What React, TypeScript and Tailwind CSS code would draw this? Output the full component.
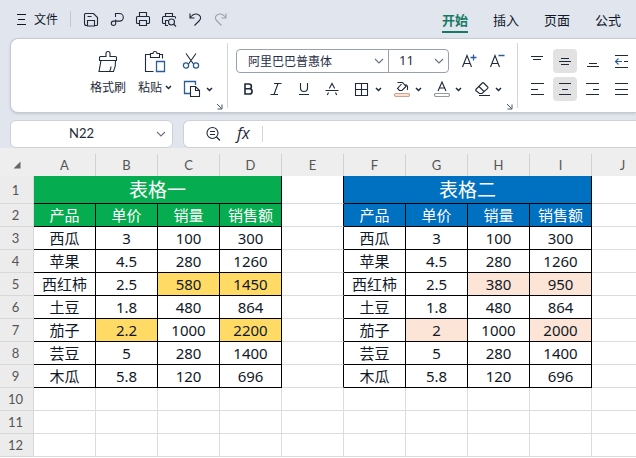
import React, { useState } from 'react';

interface Row {
  cells: string[];
  marked?: number[];
}

interface SheetTable {
  title: string;
  rows: Row[];
}

const columns = ['A', 'B', 'C', 'D', 'E', 'F', 'G', 'H', 'I', 'J'];
const rowNumbers = [1, 2, 3, 4, 5, 6, 7, 8, 9, 10, 11, 12];
const tabs = ['开始', '插入', '页面', '公式'];
const fields = ['产品', '单价', '销量', '销售额'];

const firstTable: SheetTable = {
  title: '表格一',
  rows: [
    { cells: ['西瓜', '3', '100', '300'] },
    { cells: ['苹果', '4.5', '280', '1260'] },
    { cells: ['西红柿', '2.5', '580', '1450'], marked: [2, 3] },
    { cells: ['土豆', '1.8', '480', '864'] },
    { cells: ['茄子', '2.2', '1000', '2200'], marked: [1, 3] },
    { cells: ['芸豆', '5', '280', '1400'] },
    { cells: ['木瓜', '5.8', '120', '696'] },
  ],
};

const secondTable: SheetTable = {
  title: '表格二',
  rows: [
    { cells: ['西瓜', '3', '100', '300'] },
    { cells: ['苹果', '4.5', '280', '1260'] },
    { cells: ['西红柿', '2.5', '380', '950'], marked: [2, 3] },
    { cells: ['土豆', '1.8', '480', '864'] },
    { cells: ['茄子', '2', '1000', '2000'], marked: [1, 3] },
    { cells: ['芸豆', '5', '280', '1400'] },
    { cells: ['木瓜', '5.8', '120', '696'] },
  ],
};

const Icon: React.FC<{ size?: number; className?: string; children: React.ReactNode }> = ({
  size = 16,
  className = '',
  children,
}) => (
  <svg
    width={size}
    height={size}
    viewBox={`0 0 ${size} ${size}`}
    fill="none"
    stroke="currentColor"
    strokeWidth="1.1"
    className={`shrink-0 ${className}`}
    aria-hidden="true"
  >
    {children}
  </svg>
);

const Caret = () => (
  <Icon size={7}>
    <path d="M1 2l2.5 2.5L6 2" strokeWidth="1.5" />
  </Icon>
);

const WideChevron: React.FC<{ className?: string }> = ({ className }) => (
  <Icon size={10} className={className}>
    <path d="M1 3l4 4 4-4" />
  </Icon>
);

const Launcher: React.FC<{ label: string }> = ({ label }) => (
  <button aria-label={label} className="absolute right-1 -bottom-0.5 text-gray-600">
    <Icon size={7}>
      <path d="M1 1l4.5 4.5M6 1.5V6H1.5" strokeWidth="1" />
    </Icon>
  </button>
);

const quickActions = [
  {
    label: '保存',
    icon: <path d="M4.5 14.5h-1a2 2 0 0 1-2-2v-9a1 1 0 0 1 1-1h8l4 4v7a1 1 0 0 1-1 1h-2M4.5 15V9.500h7V15zM4.500 5.500h4" />,
  },
  {
    label: '输出',
    icon: <path d="M6.500 6V2.500h4a3.800 3.800 0 0 1 0 7.600H4.500A2.200 2.200 0 1 0 6.700 12.300V8.500" />,
  },
  {
    label: '打印',
    icon: (
      <path d="M4.500 5.500v-4h7v4M4 12.500H2.500a1 1 0 0 1-1-1v-5a1 1 0 0 1 1-1h11a1 1 0 0 1 1 1v5a1 1 0 0 1-1 1H12M4.500 9.500h7v5h-7z" />
    ),
  },
  {
    label: '打印预览',
    icon: (
      <>
        <path d="M4.500 5.500v-3h7v3M14.500 7.500v-1a1 1 0 0 0-1-1h-11a1 1 0 0 0-1 1v5a1 1 0 0 0 1 1h2M7 9.500H4.500v5H7" />
        <circle cx="10.5" cy="11" r="3" />
        <path d="M12.700 13.200l2.300 2.300" />
      </>
    ),
  },
  {
    label: '撤销',
    icon: <path d="M3 2.500v4.500h4.500M3 7C5 4 8 2.500 10.500 3.200c3.500 1 3.800 4.300 2 6.300l-5 5" />,
  },
  {
    label: '恢复',
    icon: (
      <path className="text-gray-400" stroke="currentColor" d="M13 2.500v4.500H8.500M13 7C11 4 8 2.500 5.500 3.200c-3.500 1-3.800 4.300-2 6.300l5 5" />
    ),
  },
];

const alignActions = [
  { label: '顶端对齐', icon: <path d="M2 3.500h12M4 6.500h8" /> },
  { label: '垂直居中', active: true, icon: <path d="M4 5.500h8M2 8.500h12M4 11.500h8" /> },
  { label: '底端对齐', icon: <path d="M4 10.500h8M2 13.500h12" /> },
  {
    label: '减少缩进',
    icon: (
      <>
        <path d="M2 2.500h13M11 8.500h4M2 14.500h13" />
        <path d="M9 8.500H3M5.500 5.500l-3 3 3 3" stroke="#2b5d9b" />
      </>
    ),
  },
  { label: '左对齐', icon: <path d="M2 2.500h13M2 8.500h7M2 13.500h13" /> },
  { label: '水平居中', active: true, icon: <path d="M2 2.500h12M5 8.500h6M2 13.500h12" /> },
  { label: '右对齐', icon: <path d="M1 2.500h13M8 8.500h6M1 13.500h13" /> },
  { label: '两端对齐', icon: <path d="M2 2.500h13M2 8.500h13M2 13.500h13" /> },
];

const fontStyles = [
  { label: '加粗', icon: <path d="M5 3h4a2.400 2.400 0 0 1 0 4.800H5zM5 7.800h4.500a2.600 2.600 0 0 1 0 5.200H5z" strokeWidth="1.6" /> },
  { label: '倾斜', icon: <path d="M6 2.500h7.500M2.500 13.500H10M10 2.500l-4 11" /> },
  { label: '下划线', icon: <path d="M4.500 2v5a3.500 3.500 0 0 0 7 0V2M3 13.500h10" /> },
  { label: '删除线', icon: <path d="M5.300 7.500L8 2.500l2.700 5M1.500 9.500h13M4.500 11.500l-1.200 2.500M11.500 11.500l1.200 2.500" /> },
];

const fontMenus = [
  { label: '边框', icon: <path d="M1.500 2.500h12v12h-12zM7.500 2.500v12M1.500 8.500h12" /> },
  {
    label: '填充颜色',
    icon: (
      <>
        <path d="M3.500 1.500h5L12 5.500 8 9.500H5.500L3.500 7.500 7.500 3M11.500 3.500c2 .5 2.500 2.500 1.800 5.500" />
        <rect x="0.500" y="12.500" width="15" height="3" rx="1.500" fill="#fbe0d0" stroke="#c9a594" />
      </>
    ),
  },
  {
    label: '字体颜色',
    icon: (
      <>
        <path d="M4 10L8 1l4 9M5.300 7h5.400" />
        <rect x="0.500" y="12.500" width="15" height="3" rx="1.500" fill="#fff" stroke="#999" />
      </>
    ),
  },
  {
    label: '清除',
    icon: (
      <path d="M1.800 8.500L8.300 2a1 1 0 0 1 1.400 0l4 4a1 1 0 0 1 0 1.400L8 12.500H5.500L1.800 9.500a.8.8 0 0 1 0-1zM5 5.500l5 5M5 14.500h11" />
    ),
  },
];

const TitleBar: React.FC<{ active: string; onSelect: (tab: string) => void }> = ({ active, onSelect }) => (
  <header className="flex h-[38px] items-center pl-4">
    <button className="flex items-center gap-[7px] text-xs text-gray-900">
      <Icon size={11}>
        <path d="M1 0.500h9M2 5.500h7M1 10.500h9" />
      </Icon>
      文件
    </button>
    <div className="ml-3 h-4 w-px bg-[#c3c7d1]" />
    <div className="ml-3 flex gap-[10px]">
      {quickActions.map((action) => (
        <button key={action.label} aria-label={action.label}>
          <Icon>{action.icon}</Icon>
        </button>
      ))}
    </div>
    <nav className="ml-auto flex gap-[25px] pr-[15px]">
      {tabs.map((tab) => (
        <button
          key={tab}
          onClick={() => onSelect(tab)}
          className={`mt-1 h-6 border-b-2 text-[13px] leading-[22px] whitespace-nowrap ${
            tab === active ? 'border-[#187a65] font-bold text-[#187a65]' : 'border-transparent text-gray-900'
          }`}
        >
          {tab}
        </button>
      ))}
    </nav>
  </header>
);

const ClipboardGroup = () => (
  <div className="relative flex shrink-0 border-r border-gray-300 pt-[6px] pr-[14px] pl-[77px] text-xs">
    <button className="flex w-10 flex-col items-center gap-1.5 whitespace-nowrap">
      <Icon size={24}>
        <path d="M3.500 11.500v-3a1 1 0 0 1 1-1H10v-3a2 2 0 0 1 4 0v3h5.500a1 1 0 0 1 1 1v3zM5 11.500l-2 11h14.500c1.500-3 2.300-7 2-11M13.500 22.500c1-1.500 1.500-3 1.500-5" />
      </Icon>
      格式刷
    </button>
    <button className="ml-[7px] flex w-10 flex-col items-center gap-1.5 whitespace-nowrap">
      <Icon size={24}>
        <path d="M7.500 5.500h-5v17h8M16.500 5.500h3v4M7.500 8.500v-4H10a2 2 0 0 1 4 0h2.500v4z" />
        <path d="M13.500 12.500h8v10h-8z" stroke="#2b5d9b" strokeWidth="1.300" />
      </Icon>
      <span className="flex items-center gap-[3px]">
        粘贴
        <Caret />
      </span>
    </button>
    <div className="ml-1 flex flex-col gap-1">
      <button aria-label="剪切" className="flex h-6 w-6 items-center justify-center">
        <Icon size={18}>
          <path d="M4 1.500l7.500 10.500M14 1.500L6.500 12" />
          <circle cx="4" cy="13.500" r="2.600" stroke="#2b5d9b" strokeWidth="1.300" />
          <circle cx="14" cy="13.500" r="2.600" stroke="#2b5d9b" strokeWidth="1.300" />
        </Icon>
      </button>
      <button aria-label="复制" className="flex h-6 items-center gap-[5px] pl-1">
        <Icon size={18}>
          <path d="M7 13.500H1.500v-12h11V5" stroke="#2b5d9b" strokeWidth="1.300" />
          <path d="M7.500 6.500h5l4 4v6h-9zM12.500 6.500v4h4" />
        </Icon>
        <Caret />
      </button>
    </div>
    <Launcher label="剪贴板设置" />
  </div>
);

const FontGroup = () => (
  <div className="relative flex shrink-0 flex-col gap-1 border-r border-gray-300 px-2 pt-[6px]">
    <div className="flex items-center gap-1">
      <div className="mr-1 flex h-6 w-[213px] rounded border border-gray-400 text-xs">
        <div className="relative w-[152px] border-r border-gray-400">
          <select aria-label="字体" className="h-full w-full appearance-none pl-[11px] text-[#272e45] outline-none">
            <option>阿里巴巴普惠体</option>
          </select>
          <WideChevron className="pointer-events-none absolute top-1.5 right-1 text-gray-500" />
        </div>
        <div className="relative flex-1">
          <select aria-label="字号" className="h-full w-full appearance-none pl-[10px] font-['Noto_Sans',sans-serif] text-[13px] text-[#272e45] outline-none">
            <option>11</option>
          </select>
          <WideChevron className="pointer-events-none absolute top-1.5 right-1 text-gray-500" />
        </div>
      </div>
      <button aria-label="增大字号" className="flex h-6 w-6 items-center justify-center">
        <Icon>
          <path d="M1.500 14L6 2.500 10.500 14M3 10.500h6" />
          <path d="M12.500 1.500v6M9.500 4.500h6" stroke="#2b5d9b" strokeWidth="1.300" />
        </Icon>
      </button>
      <button aria-label="减小字号" className="flex h-6 w-6 items-center justify-center">
        <Icon>
          <path d="M1.500 14L6 2.500 10.500 14M3 10.500h6" />
          <path d="M9.500 2.500h6" stroke="#2b5d9b" strokeWidth="1.300" />
        </Icon>
      </button>
    </div>
    <div className="flex gap-2">
      <div className="flex gap-1">
        {fontStyles.map((style) => (
          <button key={style.label} aria-label={style.label} className="flex h-6 w-6 items-center justify-center">
            <Icon>{style.icon}</Icon>
          </button>
        ))}
      </div>
      {fontMenus.map((menu) => (
        <button key={menu.label} aria-label={menu.label} className="flex h-6 w-8 items-center gap-[5px] pl-0.5">
          <Icon>{menu.icon}</Icon>
          <Caret />
        </button>
      ))}
    </div>
    <Launcher label="字体设置" />
  </div>
);

const AlignGroup = () => (
  <div className="grid shrink-0 grid-cols-[repeat(4,24px)] content-start gap-1 pt-[6px] pl-[7px]">
    {alignActions.map((action) => (
      <button
        key={action.label}
        aria-label={action.label}
        className={`flex h-6 w-6 items-center justify-center rounded ${action.active ? 'bg-[#e2e2e2]' : ''}`}
      >
        <Icon>{action.icon}</Icon>
      </button>
    ))}
  </div>
);

const FormulaBar = () => {
  const [cellName, setCellName] = useState('N22');
  const [formula, setFormula] = useState('');

  return (
    <div className="flex gap-[10px] pt-[7px] pl-[10px]">
      <div className="flex h-7 w-[163px] items-center rounded-md border border-[#cdd1d9] bg-white pr-1.5">
        <input
          aria-label="名称框"
          value={cellName}
          onChange={(e) => setCellName(e.target.value)}
          className="w-full min-w-0 pr-1 text-center font-['Lato',sans-serif] text-[13px] outline-none"
        />
        <button aria-label="选择名称">
          <WideChevron className="text-gray-500" />
        </button>
      </div>
      <div className="flex h-7 flex-1 items-center rounded-l-md border border-r-0 border-[#cdd1d9] bg-white pl-[21px]">
        <button aria-label="查找">
          <Icon>
            <circle cx="7.500" cy="7" r="5.500" />
            <path d="M11.500 11l3.500 3.500M5 5.500h5M5 8.500h5" />
          </Icon>
        </button>
        <button aria-label="插入函数" className="ml-4 pb-0.5 font-['Open_Sans',sans-serif] text-base leading-5 italic">
          fx
        </button>
        <div className="ml-3 h-4 w-px bg-gray-300" />
        <input
          aria-label="编辑栏"
          value={formula}
          onChange={(e) => setFormula(e.target.value)}
          className="h-full min-w-0 flex-1 px-2 text-xs outline-none"
        />
      </div>
    </div>
  );
};

const tableCells = (table: SheetTable, row: number, headFill: string, markFill: string) => {
  if (row === 1) {
    return (
      <th colSpan={4} className={`border-r border-b border-black text-[19px] font-normal text-white ${headFill}`}>
        {table.title}
      </th>
    );
  }
  if (row === 2) {
    return fields.map((field) => (
      <th key={field} className={`border-r border-b border-black font-normal text-white ${headFill}`}>
        {field}
      </th>
    ));
  }
  const data = table.rows[row - 3];
  if (!data) {
    return fields.map((field) => <td key={field} className="border-r border-b border-[#dcdcdc]" />);
  }
  return data.cells.map((cell, i) => (
    <td key={i} className={`border-r border-b border-black ${data.marked?.includes(i) ? markFill : ''}`}>
      {cell}
    </td>
  ));
};

const Sheet = () => (
  <main className="flex-1 overflow-hidden bg-white">
    <div className="h-1.5 bg-[#eeeeee]" />
    <table className="w-[654px] table-fixed border-separate border-spacing-0 text-center font-['Noto_Sans','Noto_Sans_CJK_SC',sans-serif] text-[15px] leading-[22px] text-gray-900">
      <thead className="font-['Lato',sans-serif] text-[13px] leading-[22px] text-[#555]">
        <tr className="h-[22px] bg-[#eeeeee]">
          <th className="w-[34px] pl-[13px]">
            <Icon size={8}>
              <path d="M7.500 0.500v7h-7z" fill="#666" stroke="none" />
            </Icon>
          </th>
          {columns.map((column) => (
            <th key={column} className="w-[62px] border-r border-[#d2d2d2] font-normal">
              {column}
            </th>
          ))}
        </tr>
      </thead>
      <tbody>
        {rowNumbers.map((row) => (
          <tr key={row} className={row === 1 ? 'h-7' : 'h-[23px]'}>
            <th className="border-r border-b border-[#d8d8d8] bg-[#ececec] pr-0.5 font-['Lato',sans-serif] text-[13px] font-normal text-[#555]">
              {row}
            </th>
            {tableCells(firstTable, row, 'bg-[#06ad50]', 'bg-[#ffdb66]')}
            <td className={`border-r border-b border-b-[#dcdcdc] ${row < 10 ? 'border-r-black' : 'border-r-[#dcdcdc]'}`} />
            {tableCells(secondTable, row, 'bg-[#0070c0]', 'bg-[#fce4d6]')}
            <td className="border-r border-b border-[#dcdcdc]" />
          </tr>
        ))}
      </tbody>
    </table>
  </main>
);

const App: React.FC = () => {
  const [activeTab, setActiveTab] = useState('开始');

  return (
    <div className="flex min-h-screen flex-col overflow-hidden bg-[#e1e5ee] font-['Noto_Sans_CJK_SC',sans-serif] text-gray-800">
      <TitleBar active={activeTab} onSelect={setActiveTab} />
      <div className="ml-[10px] flex h-[75px] overflow-hidden rounded-l-lg border border-r-0 border-[#c6cad3] bg-white py-1 shadow">
        <ClipboardGroup />
        <FontGroup />
        <AlignGroup />
      </div>
      <FormulaBar />
      <Sheet />
    </div>
  );
};

export default App;
